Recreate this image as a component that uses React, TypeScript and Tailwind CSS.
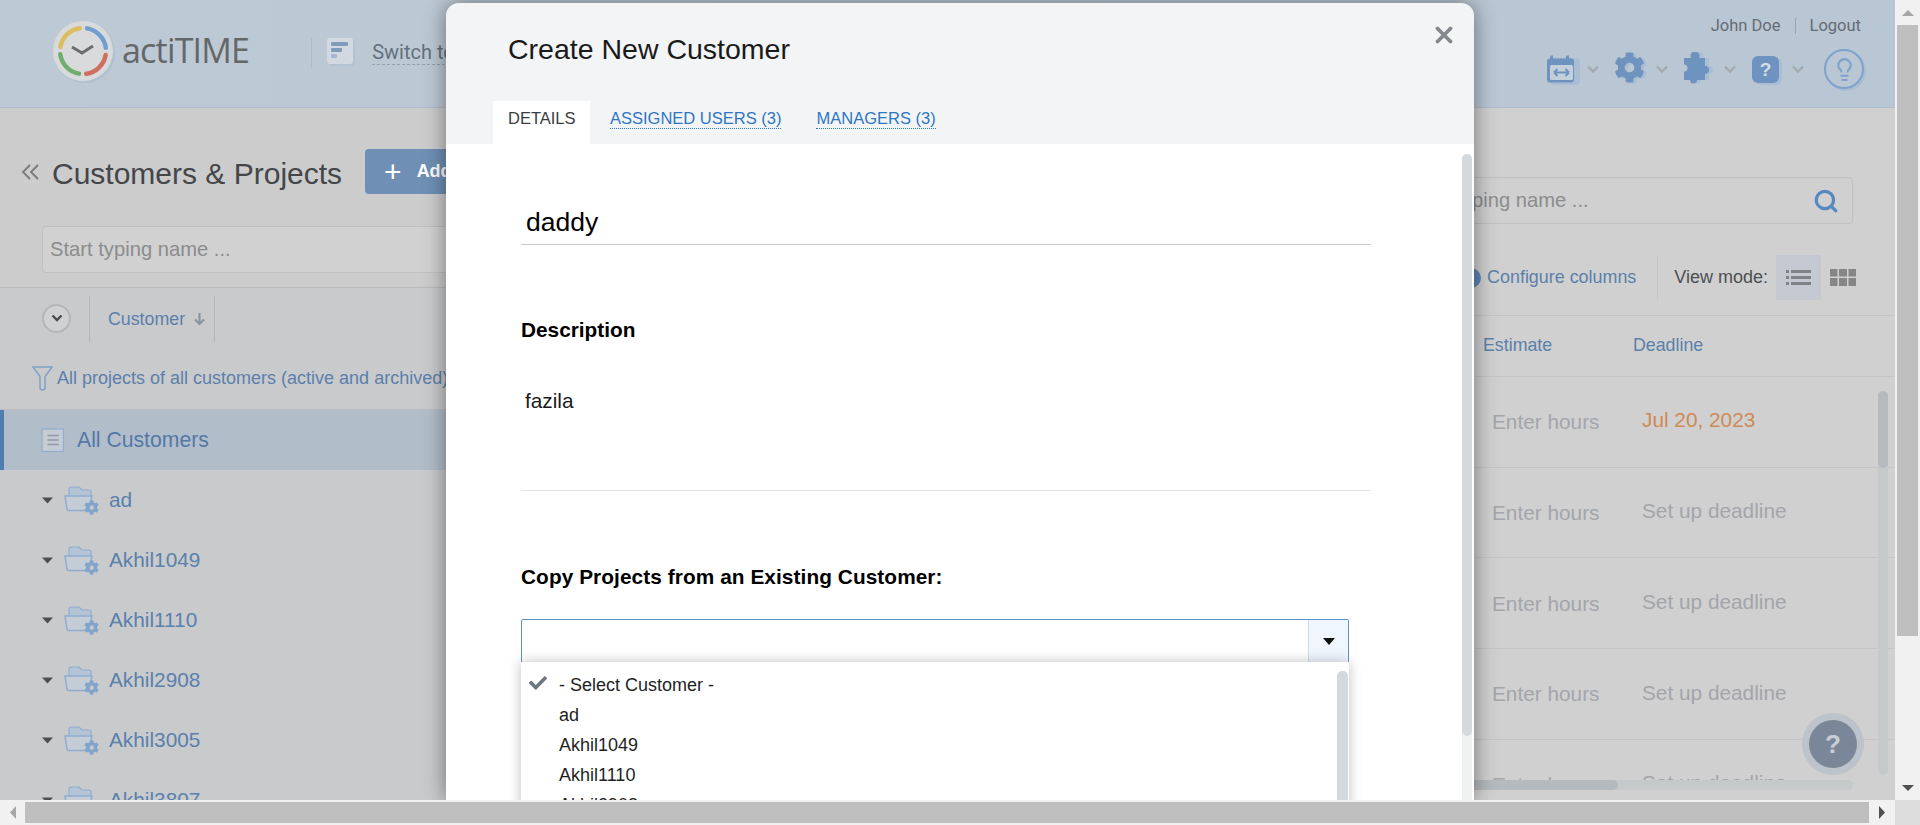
import { Lightbulb, Search, X } from 'lucide-react'
import { FaCheck, FaCog } from 'react-icons/fa'

const customers = ['ad', 'Akhil1049', 'Akhil1110', 'Akhil2908', 'Akhil3005', 'Akhil3807']
const options = ['ad', 'Akhil1049', 'Akhil1110', 'Akhil2908', 'Akhil3005']
const tableRows = ['Jul 20, 2023', 'Set up deadline', 'Set up deadline', 'Set up deadline', 'Set up deadline']

function arc(a0: number, a1: number) {
  const r = 23
  const p = (a: number) => `${31 + r * Math.cos((a * Math.PI) / 180)} ${31 + r * Math.sin((a * Math.PI) / 180)}`
  return `M${p(a0)} A${r} ${r} 0 0 1 ${p(a1)}`
}

function Logo() {
  return (
    <svg width="66" height="66" viewBox="0 0 66 66" className="shrink-0">
      <circle cx="33" cy="33" r="30" fill="#b1c1d1" />
      <circle cx="31" cy="31" r="30" fill="#d9dadb" />
      <g fill="none" strokeWidth="4.5" strokeLinecap="round">
        <path d={arc(190, 262)} stroke="#dcbd5f" />
        <path d={arc(280, 352)} stroke="#6f9fcf" />
        <path d={arc(10, 82)} stroke="#cf6f62" />
        <path d={arc(100, 172)} stroke="#6fae6d" />
      </g>
      <path d="M20 27 L30 33 L41 26" fill="none" stroke="#6a6d70" strokeWidth="3" />
    </svg>
  )
}

function Chevron({ className = '' }: { className?: string }) {
  return (
    <svg width="12" height="9" viewBox="0 0 12 9" className={className}>
      <path d="M1 1.5 L6 6.5 L11 1.5" fill="none" stroke="#a3a9af" strokeWidth="2.4" />
    </svg>
  )
}

function CalendarIcon() {
  return (
    <svg width="34" height="34" viewBox="0 0 34 34">
      <rect x="3" y="6" width="30" height="27" rx="4" fill="#a9bed5" />
      <path d="M3.5 3.5h2.5v3h13v-3h3v3h2a3 3 0 0 1 3 3v18a3 3 0 0 1-3 3H3a3 3 0 0 1-3-3V9.500a3 3 0 0 1 3-3z" fill="#6e93bf" />
      <rect x="3" y="13" width="23" height="15" rx="1.500" fill="#c3cfdb" />
      <path d="M7 20.500h15M7 20.500l3.500-3.500M7 20.500l3.500 3.500M22 20.500l-3.500-3.500M22 20.500l-3.500 3.500" stroke="#6e93bf" strokeWidth="2" fill="none" />
    </svg>
  )
}

function PuzzleIcon() {
  const d = 'M1 6H8A4.500 4.500 0 1 1 16 6H22V14A4 4 0 1 1 22 22V28H14A3.500 3.500 0 1 1 7 28H1V19.500A3.500 3.500 0 1 0 1 12.500Z'
  return (
    <svg width="36" height="34" viewBox="0 0 36 34">
      <path d={d} fill="#a9bed5" transform="translate(4 0)" />
      <path d={d} fill="#6e93bf" />
    </svg>
  )
}

function FolderGear() {
  return (
    <span className="relative w-[35px] h-[29px] shrink-0">
      <svg width="30" height="26" viewBox="0 0 30 26">
        <path d="M5 12V3a2 2 0 0 1 2-2h8l3 3h7a2 2 0 0 1 2 2v6z" fill="#b4c3d6" stroke="#8fadcf" strokeWidth="1.200" />
        <path d="M1 10h27l-3 13a2 2 0 0 1-2 1.500H5a2 2 0 0 1-2-1.500z" fill="#c4ccd6" stroke="#8fadcf" strokeWidth="1.500" />
      </svg>
      <FaCog className="absolute right-0 bottom-0 w-[15px] h-[15px] text-[#81a4cb]" />
    </span>
  )
}

function App() {
  return (
    <div className="relative w-full h-[825px] overflow-hidden bg-[#f1f1f1] font-['Liberation_Sans',sans-serif]">
      <div className="flex h-[800px]">
        {/* dimmed page */}
        <div className="w-[1895px] h-[800px] overflow-hidden bg-[#d0d0d0] shrink-0">
          <header className="h-[108px] bg-gradient-to-r from-[#bdc9d4] to-[#b9c6d3] border-b border-[#aebccb] flex items-start pl-[52px] pr-[34px]">
            <div className="mt-[20px]"><Logo /></div>
            <span className="mt-[25px] ml-[4px] font-['Open_Sans',sans-serif] font-medium text-[34px] leading-[50px] text-[#646768] tracking-[-0.8px]">actiTIME</span>
            <span className="mt-[38px] ml-[62px] w-px h-[30px] bg-[#aebdca]" />
            <span className="mt-[38px] ml-[15px] w-[26px] h-[26px] rounded-[3px] bg-[#d2d9e0] shadow-[2px_2px_0_#b4c3d2] flex flex-col gap-[2px] p-[4px]">
              <i className="block h-[4px] w-[17px] bg-[#7f9cbd] rounded-[1px]" />
              <i className="block h-[4px] w-[11px] bg-[#7f9cbd] rounded-[1px]" />
              <i className="block h-[4px] w-[6px] bg-[#a3b8cf] rounded-[1px]" />
            </span>
            <span className="mt-[40px] ml-[19px] font-['Roboto',sans-serif] text-[20px] leading-[24px] text-[#65707c] border-b border-dashed border-[#93a0ae]">Switch to</span>
            <div className="ml-auto flex flex-col items-end">
              <div className="mt-[16px] flex items-center font-['Roboto',sans-serif] text-[16.500px] leading-[20px] text-[#666c75]">
                <span>John Doe</span>
                <span className="mx-[14px] w-px h-[16px] bg-[#98a3ae]" />
                <span>Logout</span>
              </div>
              <div className="mt-[13px] flex items-center">
                <CalendarIcon />
                <Chevron className="ml-[6px]" />
                <span className="ml-[15px] relative w-[36px] h-[34px]">
                  <FaCog className="absolute left-[3px] top-[1px] w-[31px] h-[31px] text-[#a9bed5]" />
                  <FaCog className="absolute left-0 top-0 w-[31px] h-[31px] text-[#6e93bf]" />
                </span>
                <Chevron className="ml-[6px]" />
                <span className="ml-[15px] flex"><PuzzleIcon /></span>
                <Chevron className="ml-[5px]" />
                <span className="ml-[16px] w-[27px] h-[27px] rounded-[6px] bg-[#6e93bf] shadow-[3px_2px_0_#a9bed5] text-[#d3dce5] font-bold text-[19px] leading-[27px] text-center">?</span>
                <Chevron className="ml-[13px]" />
                <span className="ml-[20px] -mr-[3px] w-[40px] h-[40px] rounded-full border-2 border-[#7ea2cb] shadow-[2px_2px_0_#a9bed5] flex items-center justify-center">
                  <Lightbulb className="w-[25px] h-[25px] text-[#7ea2cb]" strokeWidth={2} />
                </span>
              </div>
            </div>
          </header>

          <div className="flex">
            {/* customers panel */}
            <aside className="w-[900px] shrink-0 bg-[#c9cacc] h-[692px] overflow-hidden">
              <div className="h-[180px] bg-[#cccccd] border-b border-[#b9babb] pt-[41px]">
                <div className="flex items-center h-[45px] pl-[21px]">
                  <svg width="19" height="16" viewBox="0 0 19 16" className="shrink-0">
                    <path d="M9 1 L2 8 L9 15 M17 1 L10 8 L17 15" fill="none" stroke="#77797c" strokeWidth="1.800" />
                  </svg>
                  <h1 className="ml-[12px] mt-[3px] text-[30px] font-normal text-[#444649]">Customers &amp; Projects</h1>
                  <span className="ml-[23px] w-[200px] h-[45px] rounded-[4px] bg-[#6f90b4] flex items-center pl-[19px] text-white font-bold text-[18px]">
                    <span className="text-[30px] font-normal leading-none mr-[15px]">+</span>Add New
                  </span>
                </div>
                <div className="mt-[32px] ml-[42px] w-[700px] h-[47px] border border-[#bfc0c1] bg-[#d1d1d1] rounded-[4px] pl-[7px] leading-[45px] text-[20.200px] text-[#8b8c8d]">Start typing name ...</div>
              </div>
              <div className="flex items-stretch h-[46px] mt-[8px] pl-[42px]">
                <span className="w-[29px] h-[29px] mt-[8px] rounded-full border-2 border-[#b5b6b7] bg-[#d0d1d2] flex items-center justify-center">
                  <svg width="12" height="9" viewBox="0 0 12 9"><path d="M1.500 1.500 L6 6 L10.500 1.500" fill="none" stroke="#4a4c4f" strokeWidth="2.400" /></svg>
                </span>
                <span className="ml-[18px] w-px bg-[#b5b6b7]" />
                <span className="ml-[18px] self-center text-[17.800px] text-[#5b80ab]">Customer</span>
                <svg width="13" height="14" viewBox="0 0 13 14" className="ml-[8px] self-center"><path d="M6.500 1v11M2 7.500l4.500 4.500 4.500-4.500" fill="none" stroke="#8a949e" strokeWidth="2.200" /></svg>
                <span className="ml-[8px] w-px bg-[#b5b6b7]" />
              </div>
              <div className="flex items-center h-[68px] pl-[32px] pt-[6px] border-b border-[#bcbcbd]">
                <svg width="21" height="25" viewBox="0 0 21 25"><path d="M1 1h19l-7 9.500V22q0 2-2.500 2T8 22V10.500z" fill="none" stroke="#7fa2c8" strokeWidth="1.500" /></svg>
                <span className="ml-[4px] text-[18px] text-[#5b80ab] whitespace-nowrap">All projects of all customers (active and archived)</span>
              </div>
              <div className="flex items-center h-[60px] bg-[#b2bdca] border-l-4 border-[#4f7db0] pl-[37px]">
                <svg width="24" height="25" viewBox="0 0 24 25">
                  <rect x="1" y="1" width="21.500" height="22.500" fill="#c5cbd2" stroke="#8fadcf" strokeWidth="1.200" />
                  <path d="M6.500 7.500h11M6.500 12h11M6.500 16.500h11" stroke="#8f9aa8" strokeWidth="1.500" />
                </svg>
                <span className="ml-[12px] text-[21.200px] text-[#5279a8]">All Customers</span>
              </div>
              {customers.map((name) => (
                <div key={name} className="flex items-center h-[60px] pl-[42px]">
                  <svg width="11" height="7" viewBox="0 0 11 7"><path d="M0 .5 H11 L5.500 6.500z" fill="#4c4e51" /></svg>
                  <span className="ml-[11px] flex"><FolderGear /></span>
                  <span className="ml-[10px] text-[20.800px] text-[#5a80ad]">{name}</span>
                </div>
              ))}
            </aside>

            {/* tasks panel */}
            <section className="flex-1 min-w-0 relative h-[672px] overflow-hidden">
              <div className="flex justify-end pr-[42px] pt-[69px]">
                <div className="w-[455px] h-[47px] border border-[#bfc0c1] rounded-[4px] flex items-center justify-between pl-[9px] pr-[13px] text-[20.200px] text-[#8b8c8d]">
                  Start typing name ...
                  <Search className="w-[26px] h-[26px] text-[#5589c0]" strokeWidth={3} />
                </div>
              </div>
              <div className="flex justify-end items-center h-[45px] mt-[31px] pr-[39px]">
                <span className="w-[20px] h-[20px] rounded-full bg-[#5f86b5] mr-[6px]" />
                <span className="text-[17.900px] text-[#5b80ab]">Configure columns</span>
                <span className="ml-[21px] w-px h-[45px] bg-[#c4c5c5]" />
                <span className="ml-[16px] text-[18px] text-[#4d4f52]">View mode:</span>
                <span className="ml-[8px] w-[45px] h-[45px] bg-[#c4c9d2] flex items-center justify-center">
                  <svg width="25" height="17" viewBox="0 0 25 17" fill="#7f8388">
                    <path d="M0 1h3v3H0zM5 1h20v3H5zM0 7h3v3H0zM5 7h20v3H5zM0 13h3v3H0zM5 13h20v3H5z" />
                  </svg>
                </span>
                <svg width="26" height="17" viewBox="0 0 26 17" fill="#868686" className="ml-[9px]">
                  <path d="M0 0h7.500v7.500H0zM9 0h8v7.500H9zM18.500 0h7.500v7.500h-7.500zM0 9h7.500v8H0zM9 9h8v8H9zM18.500 9h7.500v8h-7.500z" />
                </svg>
              </div>
              <div className="ml-auto w-[1000px] mr-[34px] mt-[15px] border-t border-[#c4c5c5] h-[61px] pb-[2px] flex items-center pl-[583px] text-[17.800px] text-[#5b80ab]">
                <span className="w-[150px]">Estimate</span>
                <span>Deadline</span>
              </div>
              {tableRows.map((deadline, i) => (
                <div key={i} className="ml-auto w-[1000px] mr-[34px] h-[90.670px] border-t border-[#c4c5c5] flex items-center pl-[592px] text-[20.800px] text-[#a3a5aa]">
                  <span className="w-[150px]">Enter hours</span>
                  <span className={i === 0 ? 'text-[#cf8a55] -mt-[5px]' : '-mt-[3px]'}>{deadline}</span>
                </div>
              ))}
            </section>
          </div>
        </div>

        {/* browser vertical scrollbar */}
        <div className="w-[25px] h-[800px] flex flex-col items-center px-[2px] bg-[#f1f1f1]">
          <svg width="12" height="25" viewBox="0 0 12 25" className="shrink-0"><path d="M0 16 L6 10 L12 16z" fill="#a6a6a6" /></svg>
          <div className="w-full h-[611px] bg-[#bebebe]" />
          <div className="flex-1" />
          <svg width="12" height="25" viewBox="0 0 12 25" className="shrink-0 -mb-[1px]"><path d="M0 9 L6 15 L12 9z" fill="#505050" /></svg>
        </div>
      </div>

      {/* browser horizontal scrollbar */}
      <div className="flex items-center h-[25px]">
        <svg width="25" height="25" viewBox="0 0 25 25" className="shrink-0"><path d="M16 6 L10 12.500 L16 19z" fill="#a6a6a6" /></svg>
        <div className="w-[1844px] h-[21px] bg-[#bebebe]" />
        <svg width="26" height="25" viewBox="0 0 26 25" className="shrink-0"><path d="M10 6 L16 12.500 L10 19z" fill="#505050" /></svg>
        <div className="w-[25px] h-[25px] bg-[#dcdcdc]" />
      </div>

      {/* table scrollbars */}
      <div className="absolute left-[1878px] top-[391px] w-[10px] h-[384px] rounded-[5px] bg-[#c6c9ca]">
        <div className="w-full h-[77px] rounded-[5px] bg-[#b5babe]" />
      </div>
      <div className="absolute left-[1474px] top-[780px] w-[379px] h-[10px] rounded-r-[5px] bg-[#c6c9ca]">
        <div className="w-[144px] h-full rounded-r-[5px] bg-[#b5babe]" />
      </div>

      {/* help bubble */}
      <div className="absolute left-[1802px] top-[713px] w-[62px] h-[62px] rounded-full bg-[#bcc3cb] flex items-center justify-center">
        <span className="w-[48px] h-[48px] rounded-full bg-[#7a8798] text-[#c8cdd3] font-bold text-[26px] leading-[48px] text-center">?</span>
      </div>

      {/* modal */}
      <div className="absolute left-[446px] top-[3px] w-[1028px] h-[797px] rounded-t-[13px] bg-white overflow-hidden">
        <div className="relative h-[141px] bg-[#f3f4f6]">
          <h2 className="absolute left-[62px] top-[28px] text-[28.500px] leading-[36px] font-normal text-[#1a1a1a]">Create New Customer</h2>
          <X className="absolute right-[17px] top-[19px] w-[26px] h-[26px] text-[#85898e]" strokeWidth={3.500} />
          <div className="absolute left-[47px] bottom-0 flex items-stretch h-[43px] text-[16.500px]">
            <span className="px-[15px] bg-white text-[#3a3d42] leading-[30px] pt-[2px] w-[97px] whitespace-nowrap">DETAILS</span>
            <span className="ml-[20px] self-start mt-[7px] leading-[20px] text-[#2d76c4] border-b border-dotted border-[#2d76c4]">ASSIGNED USERS (3)</span>
            <span className="ml-[35px] self-start mt-[7px] leading-[20px] text-[#2d76c4] border-b border-dotted border-[#2d76c4]">MANAGERS (3)</span>
          </div>
        </div>
        <div className="relative pl-[75px] pr-[103px]">
          <div className="h-[101px] pt-[59px] pl-[5px] border-b border-[#c9c9c9] text-[26.500px] leading-[39px] text-black -mb-px">daddy</div>
          <h3 className="mt-[72px] text-[20.800px] leading-[28px] font-bold text-black">Description</h3>
          <div className="mt-[43px] pl-[4px] text-[20.800px] leading-[28px] text-[#1a1a1a] h-[103px]">fazila</div>
          <div className="border-b border-[#e3e3e3]" />
          <h3 className="mt-[72px] text-[20.800px] leading-[28px] font-bold text-black tracking-[0.08px]">Copy Projects from an Existing Customer:</h3>
          <div className="relative mt-[28px] h-[44px] w-[828px] border border-[#5b93c8] rounded-[2px]">
            <span className="absolute right-0 top-0 bottom-0 w-[40px] bg-[#f0f6fd] border-l border-[#d5d9dd] flex items-center justify-center">
              <svg width="12" height="7" viewBox="0 0 12 7"><path d="M0 0 H12 L6 7z" fill="#111" /></svg>
            </span>
            {/* open list */}
            <div className="absolute left-[-1px] top-[42px] w-[828px] h-[240px] bg-white shadow-[0_0_12px_rgba(0,0,0,0.25)] pt-[8px]">
              <div className="relative flex items-center h-[30px] pl-[38px] text-[18px] text-[#1f1f1f]">
                <FaCheck className="absolute left-[8px] top-[4px] w-[18px] h-[18px] text-[#6d7780]" />
                - Select Customer -
              </div>
              {options.map((o) => (
                <div key={o} className="flex items-center h-[30px] pl-[38px] text-[18px] text-[#1f1f1f]">{o}</div>
              ))}
              <div className="absolute right-[1px] top-[9px] bottom-0 w-[11px] rounded-[5px] bg-[#d3d9dd]" />
            </div>
          </div>
        </div>
        {/* modal scrollbar */}
        <div className="absolute left-[1016px] top-[151px] bottom-0 w-[10px] rounded-t-[5px] bg-[#f0f2f2]">
          <div className="w-full h-[582px] rounded-[5px] bg-[#d3d9dd]" />
        </div>
      </div>
      <div className="absolute left-[446px] top-[3px] w-[1028px] h-[797px] rounded-t-[13px] shadow-[0_0_22px_rgba(0,0,0,0.45)] pointer-events-none [clip-path:inset(-30px_-30px_0_-30px)]" />
    </div>
  )
}

export default App
